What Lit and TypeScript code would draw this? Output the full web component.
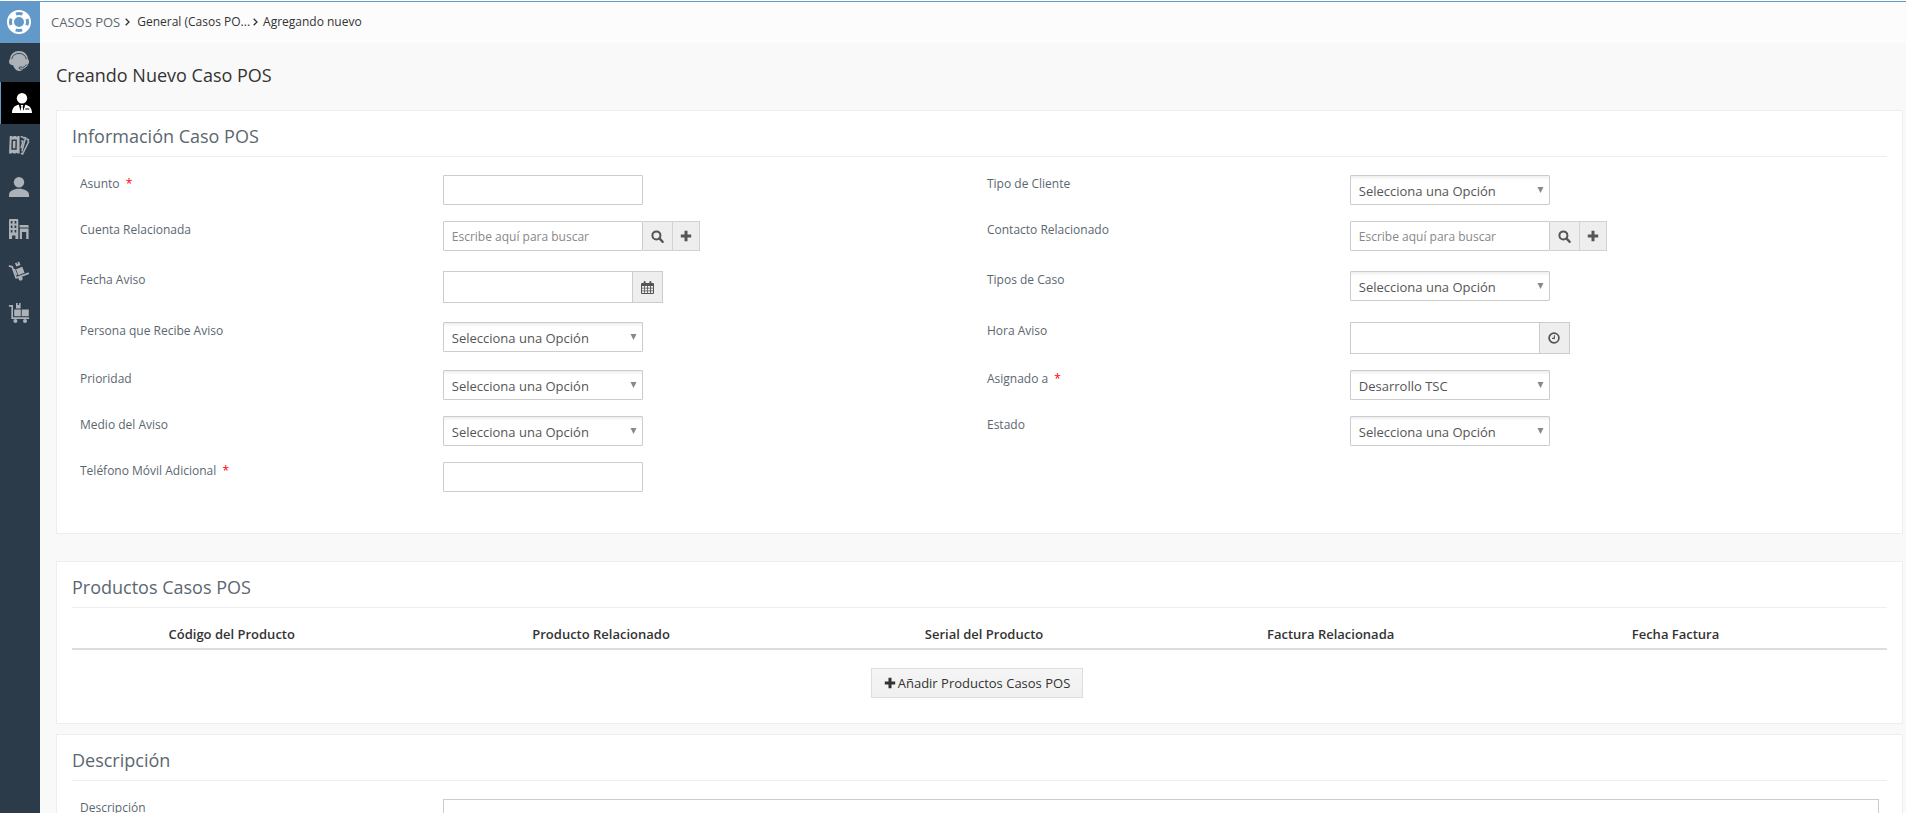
import { LitElement, html, css, svg, nothing, TemplateResult } from "lit";
import { customElement, property } from "lit/decorators.js";

type Kind = "text" | "select" | "lookup" | "date" | "time";

interface Field {
  id: string;
  label: string;
  kind: Kind;
  required?: boolean;
  value?: string;
}

interface Row {
  size: string;
  fields: Field[];
}

const ROWS: Row[] = [
  {
    size: "",
    fields: [
      { id: "asunto", label: "Asunto", kind: "text", required: true },
      { id: "tipo-cliente", label: "Tipo de Cliente", kind: "select" },
    ],
  },
  {
    size: "row-lookup",
    fields: [
      { id: "cuenta", label: "Cuenta Relacionada", kind: "lookup" },
      { id: "contacto", label: "Contacto Relacionado", kind: "lookup" },
    ],
  },
  {
    size: "row-date",
    fields: [
      { id: "fecha", label: "Fecha Aviso", kind: "date" },
      { id: "tipos-caso", label: "Tipos de Caso", kind: "select" },
    ],
  },
  {
    size: "",
    fields: [
      { id: "persona", label: "Persona que Recibe Aviso", kind: "select" },
      { id: "hora", label: "Hora Aviso", kind: "time" },
    ],
  },
  {
    size: "",
    fields: [
      { id: "prioridad", label: "Prioridad", kind: "select" },
      { id: "asignado", label: "Asignado a", kind: "select", required: true, value: "Desarrollo TSC" },
    ],
  },
  {
    size: "",
    fields: [
      { id: "medio", label: "Medio del Aviso", kind: "select" },
      { id: "estado", label: "Estado", kind: "select" },
    ],
  },
  {
    size: "",
    fields: [{ id: "telefono", label: "Teléfono Móvil Adicional", kind: "text", required: true }],
  },
];

const plusIcon = svg`<path fill="currentColor" d="M4.500 .8h3v3.700h3.700v3H7.500v3.700h-3V7.500H.8v-3h3.700z"/>`;
const searchIcon = svg`<circle cx="5.400" cy="5.400" r="4" fill="none" stroke="currentColor" stroke-width="2"/><path d="M8.400 8.400l3.200 3.400" stroke="currentColor" stroke-width="2.400" stroke-linecap="round"/>`;
const calendarIcon = svg`<path fill="currentColor" fill-rule="evenodd" d="M1 2h1.600V.9Q2.600 0 3.600 0t1 .9V2h3.800V.9q0-.9 1-.9t1 .9V2H12q1 0 1 1v9q0 1-1 1H1q-1 0-1-1V3q0-1 1-1zm0 3v1.800h2.100V5zm2.900 0v1.800h2.200V5zm3 0v1.800h2.200V5zM10 5v1.800h2V5zM1 7.600v1.800h2.100V7.600zm2.900 0v1.800h2.200V7.600zm3 0v1.800h2.200V7.600zm3.100 0v1.800h2V7.600zM1 10.200V12h2.100v-1.800zm2.900 0V12h2.200v-1.800zm3 0V12h2.200v-1.800zm3.100 0V12h2v-1.800z"/>`;
const clockIcon = svg`<circle cx="6" cy="6" r="4.900" fill="none" stroke="currentColor" stroke-width="1.700"/><path d="M6.400 3.200v3.200H4" fill="none" stroke="currentColor" stroke-width="1.100"/>`;

const NAV: { name: string; art: TemplateResult }[] = [
  {
    name: "Soporte",
    art: svg`<path fill="currentColor" d="M10 0c5 0 8.600 3.200 9 8.200 1.400.5 1.400 4.600-.2 5.400-.9 2.500-2.600 3.700-4.700 4.100-.8 1.400-2.300 2.300-4.100 2.300-2.600 0-4.800-2.500-5.900-5.700C2 14.300 0 13 0 10.800c0-1.300.3-2.300 1-2.600C1.400 3.200 5 0 10 0z"/><path d="M2.700 8.200C3.400 4.500 6.200 2.400 10 2.400s6.600 2.100 7.300 5.800" fill="none" stroke="#2c3b49" stroke-width=".9"/><path d="M17.200 13.400c-.7 1.800-2 2.700-3.700 3-.5-.8-3.400-.8-3.600.5 0 1.200 2 1.600 3.200 1" fill="none" stroke="#2c3b49" stroke-width=".9"/>`,
  },
  {
    name: "Casos POS",
    art: svg`<circle cx="10" cy="5.200" r="5.200" fill="currentColor"/><path fill="currentColor" fill-rule="evenodd" d="M0 20c0-5 2.600-7.600 6.800-8.300L8.600 18l.7-4.400-.7-1.600h2.800l-.7 1.600.7 4.400 1.800-6.300c4.200.7 6.800 3.300 6.800 8.300zM13.300 15.600v.9h4v-.9z"/>`,
  },
  {
    name: "Tiquetes",
    art: svg`<path fill="currentColor" fill-rule="evenodd" d="M.8 1h2.100q.8 1.500 1.900 0h2.100q1 1.500 2 0h1.700v17.500H8.400q-.8-1.500-1.900 0h-2.100q-1-1.500-2 0H0zM2.600 4.500l-.3 10.300h5.400l.2-10.300zM4 6h2.500l-.2 7.200H3.800z"/><path fill="none" stroke="currentColor" stroke-width="1.500" d="M11.600 1.600l2.200.5q.7 1.500 1.900.4l.9.300-3.700 13.600M16.600 3.600l2.800 1q-.9 1.600.2 2.200l-6 12.200-1.700-.8M12.200 5.800l1.700.5-1.800 7"/>`,
  },
  {
    name: "Contactos",
    art: svg`<circle cx="10" cy="5.200" r="5.200" fill="currentColor"/><path fill="currentColor" d="M0 20v-2.200c0-3.500 4.500-6 10-6s10 2.500 10 6V20z"/>`,
  },
  {
    name: "Organizaciones",
    art: svg`<path fill="currentColor" fill-rule="evenodd" d="M0 1.200Q0 0 1.200 0h6.900q1.200 0 1.200 1.200V20H6.400v-3.600H3.100V20H0zm1.800.9v2.500h1.600V2.100zm3.800 0v2.500h1.700V2.100zM1.800 6.600v2.500h1.600V6.600zm3.800 0v2.500h1.700V6.600zM1.800 11v2.500h1.600V11zm3.800 0v2.500h1.700V11zM10.600 6h8.600l.8 2.400h-9.400zm.2 3.600h8.800V20h-2.400v-7h-4.200v7h-2.200z"/>`,
  },
  {
    name: "Proveedores",
    art: svg`<path d="M.5 5.200l2.700.6 3.800 11" fill="none" stroke="currentColor" stroke-width="1.700" stroke-linecap="round"/><path d="M8 16.600l11.300-4.200" fill="none" stroke="currentColor" stroke-width="1.700" stroke-linecap="round"/><circle cx="11.600" cy="17.600" r="2.100" fill="currentColor"/><path fill="currentColor" d="M7 8.200l6.200-2.400 2.400 6-6.300 2.400zM6 2.200l1.600-.6.5 1.300.9-.3-.5-1.400L10.100.6 11.500 4 7.300 5.600zM4.600 8.300l1.500-.6 2.400 6.200-1.500.6z"/>`,
  },
  {
    name: "Productos",
    art: svg`<path d="M.6 2.800h2.600v12.400h16.200" fill="none" stroke="currentColor" stroke-width="1.700" stroke-linecap="round"/><circle cx="6.400" cy="18" r="2" fill="currentColor"/><circle cx="16" cy="18" r="2" fill="currentColor"/><path fill="currentColor" d="M5.200 6.500h6.600v6.800H5.200zM12.700 6.500h7.100v6.800h-7.100zM7 0h1.600v2.100h1.500V0h1.500v5.500H7z"/>`,
  },
];

@customElement("form-field")
class FormField extends LitElement {
  @property({ attribute: false }) field!: Field;

  static styles = css`
    :host { display: contents; }
    .label { padding: 8px; font-size: 12px; line-height: 18px; color: #5b6770; }
    .required { color: #f00; margin-left: 3px; }
    .value { padding: 8px; }
    .box {
      box-sizing: border-box; height: 30px; width: 200px; margin: 0; padding: 0 8px;
      border: 1px solid #ccc; border-radius: 1px; background: #fff; outline: none;
      font: 12px/18px "Open Sans", sans-serif; color: #555; display: block;
    }
    .box::placeholder { color: #888; opacity: 1; }
    .pick { display: grid; width: 200px; }
    .pick > * { grid-area: 1 / 1; }
    .list { appearance: none; padding-top: 2px; font-size: 13px; background: linear-gradient(#eee, #fff 4px); }
    .arrow { justify-self: end; align-self: center; margin-right: 6px; pointer-events: none; }
    .group { display: flex; }
    .addon {
      box-sizing: border-box; display: grid; place-items: center; height: 30px; width: 30px;
      margin: 0; padding: 0; border: 1px solid #d2d2d2; border-left: 0; background: #eee; color: #555;
    }
    .addon.add { width: 27px; }
    .box.dated { width: 190px; height: 32px; border-radius: 0; }
    .addon.dated { height: 32px; border-color: #ccc; }
  `;

  private control() {
    const f = this.field;
    switch (f.kind) {
      case "select":
        return html`<div class="pick">
          <select class="box list" id=${f.id}><option>${f.value ?? "Selecciona una Opción"}</option></select>
          <svg class="arrow" width="7" height="6" viewBox="0 0 7 6"><path fill="#888" d="M.5 0h6L3.500 6z"/></svg>
        </div>`;
      case "lookup":
        return html`<div class="group">
          <input class="box" id=${f.id} type="text" placeholder="Escribe aquí para buscar">
          <button class="addon" type="button" aria-label="Buscar"><svg width="13" height="13" viewBox="0 0 13 13">${searchIcon}</svg></button>
          <button class="addon add" type="button" aria-label="Crear"><svg width="12" height="12" viewBox="0 0 12 12">${plusIcon}</svg></button>
        </div>`;
      case "date":
        return html`<div class="group">
          <input class="box dated" id=${f.id} type="text">
          <button class="addon dated" type="button" aria-label="Calendario"><svg width="13" height="13" viewBox="0 0 13 13">${calendarIcon}</svg></button>
        </div>`;
      case "time":
        return html`<div class="group">
          <input class="box dated" id=${f.id} type="text">
          <button class="addon dated" type="button" aria-label="Hora"><svg width="12" height="12" viewBox="0 0 12 12">${clockIcon}</svg></button>
        </div>`;
      default:
        return html`<input class="box" id=${f.id} type="text">`;
    }
  }

  render() {
    const f = this.field;
    return html`
      <label class="label" for=${f.id}>${f.label} ${f.required ? html`<span class="required">*</span>` : nothing}</label>
      <div class="value">${this.control()}</div>
    `;
  }
}

@customElement("app-root")
class AppRoot extends LitElement {
  static styles = css`
    :host {
      display: flex; flex-direction: column; height: 100vh; overflow: hidden;
      font-family: "Open Sans", sans-serif; font-size: 13px; color: #333; background: #f9f9f9;
    }
    .top { flex: none; height: 1px; background: #5e97c9; border-top: 1px solid #fff; }
    .shell { flex: 1; display: flex; min-height: 0; }
    .side { flex: none; width: 40px; background: #2c3b49; color: #adb1b8; }
    .home { display: grid; place-items: center; box-sizing: border-box; height: 41px; padding: 0 2px 2px 0; background: #6399c8; color: #fff; }
    .item { display: block; box-sizing: border-box; height: 42px; padding: 11px 9px; color: inherit; }
    .item:nth-child(2) { height: 39px; padding-top: 8px; }
    .item.active { background: #000; color: #fff; border-left: 1px solid #6399c8; padding-left: 11px; }
    .item svg { display: block; overflow: visible; }
    .main { flex: 1; min-width: 0; overflow-y: auto; scrollbar-width: none; }
    .crumbs {
      display: flex; align-items: center; box-sizing: border-box; height: 41px; padding: 0 0 2px 11px;
      background: #fcfcfc; font-size: 12px; line-height: 18px;
    }
    .crumbs a { color: #333; text-decoration: none; }
    .crumbs a.module { font-size: 13px; color: #5b6770; }
    .sep { margin: 0 7px 0 5px; }
    .sep.tight { margin: 0 5px 0 3px; }
    .content { padding: 0 3px 20px 16px; }
    .title { margin: 0; padding: 20px 0 22px; font-size: 18px; line-height: 25px; font-weight: 400; color: #333; }
    .panel { border: 1px solid #eee; background: #fff; padding: 0 15px; }
    .panel.info { padding-bottom: 33px; margin-bottom: 27px; }
    .panel.products { padding-bottom: 25px; margin-bottom: 10px; }
    .heading {
      margin: 0; padding: 13px 0 7px; border-bottom: 1px solid #eee;
      font-size: 18px; line-height: 25px; font-weight: 400; color: #5b6770;
    }
    .fields { padding: 10px 1px 0 0; }
    .row { display: grid; grid-template-columns: 20% 30% 20% 30%; }
    .row-lookup { min-height: 50px; }
    .row-date { min-height: 51px; }
    .items { width: 100%; table-layout: fixed; border-collapse: collapse; }
    .items th { height: 22px; padding: 15px 0 3px; font-weight: 600; line-height: 20px; text-align: center; border-bottom: 2px solid #ddd; }
    .items td { padding: 0; border-bottom: 2px solid #ddd; }
    .c1 { width: 17.6%; }
    .c2 { width: 23.1%; }
    .c3, .c4 { width: 19.1%; }
    .c5 { width: 18.9%; }
    .actions { display: flex; justify-content: center; padding: 18px 5px 0 0; }
    .add {
      display: flex; align-items: center; gap: 2px; height: 30px; box-sizing: border-box; padding: 0 12px; margin: 0;
      border: 1px solid #ddd; background: linear-gradient(#f5f5f5, #f0f0f0); font: 13px/20px "Open Sans", sans-serif; color: #333;
    }
    .desc-row { display: grid; grid-template-columns: 20% 80%; padding-right: 0; }
    .label { padding: 8px; font-size: 12px; line-height: 18px; color: #5b6770; }
    .value { padding: 8px; }
    .area { display: block; box-sizing: border-box; width: 100%; height: 80px; margin: 0; border: 1px solid #ccc; resize: none; font: 13px "Open Sans", sans-serif; }
  `;

  render() {
    return html`
      <div class="top"></div>
      <div class="shell">
        <nav class="side" aria-label="Módulos">
          <a class="home" href="#" aria-label="Inicio">
            <svg width="26" height="26" viewBox="0 0 26 26" fill="none">
              <circle cx="13" cy="13" r="8.500" stroke="currentColor" stroke-width="7"/>
              <circle cx="13" cy="13" r="8.500" stroke="#6399c8" stroke-width="3" stroke-dasharray="6.600 6.750" stroke-dashoffset="3.300"/>
            </svg>
          </a>
          ${NAV.map(
            (n, i) => html`<a class=${i === 1 ? "item active" : "item"} href="#" aria-label=${n.name}>
              <svg width="20" height="20" viewBox="0 0 20 20">${n.art}</svg>
            </a>`
          )}
        </nav>
        <main class="main">
          <nav class="crumbs" aria-label="Ruta">
            <a class="module" href="#">CASOS POS</a>
            <svg class="sep" width="5" height="8" viewBox="0 0 5 8"><path d="M.7.7L4 4 .7 7.300" fill="none" stroke="#333" stroke-width="1.300"/></svg>
            <a href="#">General (Casos PO...</a>
            <svg class="sep tight" width="5" height="8" viewBox="0 0 5 8"><path d="M.7.7L4 4 .7 7.300" fill="none" stroke="#333" stroke-width="1.300"/></svg>
            <a href="#">Agregando nuevo</a>
          </nav>
          <form class="content">
            <h1 class="title">Creando Nuevo Caso POS</h1>
            <section class="panel info">
              <h2 class="heading">Información Caso POS</h2>
              <div class="fields">
                ${ROWS.map(
                  (r) => html`<div class="row ${r.size}">
                    ${r.fields.map((f) => html`<form-field .field=${f}></form-field>`)}
                  </div>`
                )}
              </div>
            </section>
            <section class="panel products">
              <h2 class="heading">Productos Casos POS</h2>
              <table class="items">
                <colgroup><col class="c1"><col class="c2"><col class="c3"><col class="c4"><col class="c5"><col></colgroup>
                <thead>
                  <tr>
                    <th>Código del Producto</th>
                    <th>Producto Relacionado</th>
                    <th>Serial del Producto</th>
                    <th>Factura Relacionada</th>
                    <th>Fecha Factura</th>
                    <td></td>
                  </tr>
                </thead>
              </table>
              <div class="actions">
                <button class="add" type="button">
                  <svg width="12" height="12" viewBox="0 0 12 12">${plusIcon}</svg>Añadir Productos Casos POS
                </button>
              </div>
            </section>
            <section class="panel">
              <h2 class="heading">Descripción</h2>
              <div class="fields desc-row">
                <label class="label" for="descripcion">Descripción</label>
                <div class="value"><textarea class="area" id="descripcion"></textarea></div>
              </div>
            </section>
          </form>
        </main>
      </div>
    `;
  }
}
